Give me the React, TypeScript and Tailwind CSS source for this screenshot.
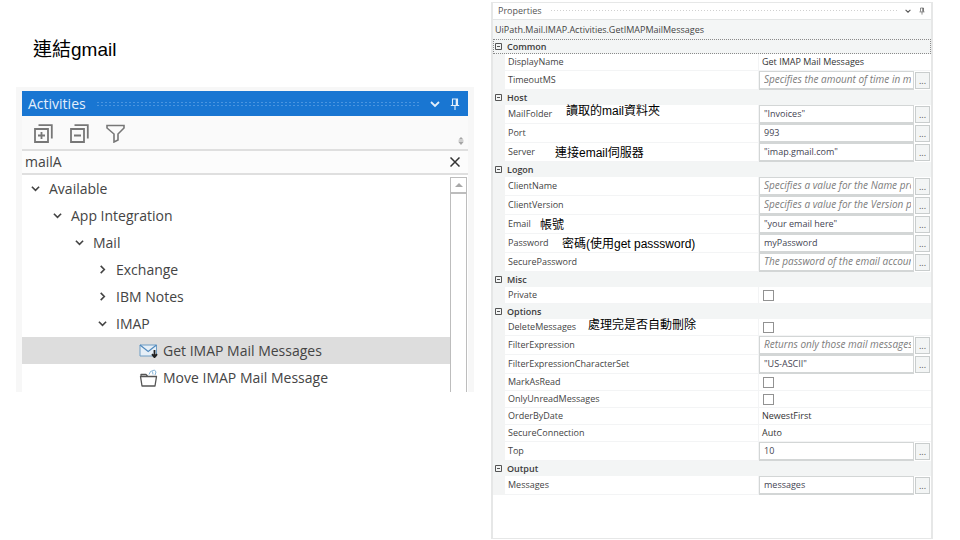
import React from "react";

type Note = { text: string; place: string };
type Row = {
  name: string;
  kind: "text" | "input" | "check";
  value?: string;
  hint?: string;
  note?: Note;
};
type Group = { title: string; focused?: boolean; rows: Row[] };

const groups: Group[] = [
  {
    title: "Common",
    focused: true,
    rows: [
      { name: "DisplayName", kind: "text", value: "Get IMAP Mail Messages" },
      { name: "TimeoutMS", kind: "input", hint: "Specifies the amount of time in milliseconds" },
    ],
  },
  {
    title: "Host",
    rows: [
      { name: "MailFolder", kind: "input", value: '"Invoices"', note: { text: "讀取的mail資料夾", place: "left-[73px] items-start" } },
      { name: "Port", kind: "input", value: "993" },
      { name: "Server", kind: "input", value: '"imap.gmail.com"', note: { text: "連接email伺服器", place: "left-[62px] items-center" } },
    ],
  },
  {
    title: "Logon",
    rows: [
      { name: "ClientName", kind: "input", hint: "Specifies a value for the Name property" },
      { name: "ClientVersion", kind: "input", hint: "Specifies a value for the Version property" },
      { name: "Email", kind: "input", value: '"your email here"', note: { text: "帳號", place: "left-[47px] items-center" } },
      { name: "Password", kind: "input", value: "myPassword", note: { text: "密碼(使用get passsword)", place: "left-[69px] items-center" } },
      { name: "SecurePassword", kind: "input", hint: "The password of the email account" },
    ],
  },
  { title: "Misc", rows: [{ name: "Private", kind: "check" }] },
  {
    title: "Options",
    rows: [
      { name: "DeleteMessages", kind: "check", note: { text: "處理完是否自動刪除", place: "left-[95px] items-start" } },
      { name: "FilterExpression", kind: "input", hint: "Returns only those mail messages" },
      { name: "FilterExpressionCharacterSet", kind: "input", value: '"US-ASCII"' },
      { name: "MarkAsRead", kind: "check" },
      { name: "OnlyUnreadMessages", kind: "check" },
      { name: "OrderByDate", kind: "text", value: "NewestFirst" },
      { name: "SecureConnection", kind: "text", value: "Auto" },
      { name: "Top", kind: "input", value: "10" },
    ],
  },
  { title: "Output", rows: [{ name: "Messages", kind: "input", value: "messages" }] },
];

function Chevron({ open = true, className = "" }: { open?: boolean; className?: string }) {
  return (
    <svg viewBox="0 0 10 10" className={className} fill="none" stroke="currentColor" strokeWidth="1.8">
      <path d={open ? "M1 3l4 4 4-4" : "M3 1l4 4-4 4"} />
    </svg>
  );
}

function Pin({ className = "" }: { className?: string }) {
  return (
    <svg viewBox="0 0 10 12" className={className} fill="none" stroke="currentColor" strokeWidth="1.1">
      <path d="M2.5 7V1h5v6M0.8 7.5h8.4M5 7.5V12" />
      <path d="M6.5 1v6" strokeWidth="1.6" />
    </svg>
  );
}

function PropertyRow({ row }: { row: Row }) {
  const id = "prop-" + row.name;
  return (
    <div className={`relative flex ${row.kind === "input" ? "h-[19px]" : "h-[17px]"}`}>
      <div className="w-3 shrink-0 bg-[#f3f4f4]" />
      <label htmlFor={id} className="flex min-w-0 flex-1 items-center border-b border-[#f3f4f5] pl-[3px] text-[#444]">
        {row.name}
      </label>
      {row.kind === "input" && (
        <div className="flex w-[173px] shrink-0 items-stretch border-l border-[#f3f4f5]">
          <input
            id={id}
            defaultValue={row.value}
            placeholder={row.hint}
            className="min-w-0 flex-1 border border-b-2 border-[#d3d6d6] bg-white pr-0.5 pl-1 text-[#444452] outline-none placeholder:text-[10px] placeholder:text-[#7c7c7c] placeholder:italic placeholder:opacity-100"
          />
          <button
            type="button"
            aria-label={"Edit " + row.name}
            className="my-px mr-px ml-px flex w-[15px] items-center justify-center border border-[#c9cdcd] bg-[#f3f5f5] text-[#555]"
          >
            ...
          </button>
        </div>
      )}
      {row.kind === "check" && (
        <div className="flex w-[173px] shrink-0 items-center border-b border-l border-[#f3f4f5] pl-1">
          <input id={id} type="checkbox" className="h-[11px] w-[11px] appearance-none border border-[#929292] bg-white" />
        </div>
      )}
      {row.kind === "text" && (
        <output id={id} className="flex w-[173px] shrink-0 items-center border-b border-l border-[#f3f4f5] pl-[3px] text-[#333]">
          {row.value}
        </output>
      )}
      {row.note && (
        <span
          className={`pointer-events-none absolute inset-y-0 flex whitespace-nowrap font-['Liberation_Sans','Noto_Sans_CJK_TC',sans-serif] text-xs leading-none text-black ${row.note.place}`}
        >
          {row.note.text}
        </span>
      )}
    </div>
  );
}

function PropertiesPanel() {
  return (
    <section className="mt-0.5 mb-px min-w-0 border-x-2 border-t border-b border-[#e6e7e7] bg-white font-['Open_Sans','Noto_Sans',sans-serif] text-[9px]">
      <header className="flex h-4 items-center pr-1.5 pl-[5px] text-[#555]">
        <h2>Properties</h2>
        <div className="mx-2 h-1 flex-1 bg-[radial-gradient(#d0d0d0_30%,transparent_45%)] bg-[length:3px_3px]" />
        <button type="button" aria-label="Panel options" className="mr-2">
          <Chevron className="h-1.5 w-1.5" />
        </button>
        <button type="button" aria-label="Pin panel">
          <Pin className="h-2 w-1.5" />
        </button>
      </header>
      <div className="flex h-5 items-center border-t border-[#e3e5e5] bg-[#f4f6f6] pl-0.5 text-[#444]">
        UiPath.Mail.IMAP.Activities.GetIMAPMailMessages
      </div>
      {groups.map((g) => (
        <div key={g.title}>
          <h3
            className={`flex h-[15px] items-center bg-[#f3f5f5] font-semibold text-[#3c3c3c] ${g.focused ? "border border-dotted border-[#8a8a8a]" : "border border-transparent"}`}
          >
            <button type="button" className="flex items-center gap-[5px] leading-none">
              <svg viewBox="0 0 7 7" className="ml-px h-[7px] w-[7px]" fill="none" stroke="#555">
                <path d="M.5.5h6v6h-6zM2 3.5h3" />
              </svg>
              {g.title}
            </button>
          </h3>
          {g.rows.map((r) => (
            <PropertyRow key={r.name} row={r} />
          ))}
        </div>
      ))}
    </section>
  );
}

const tree = [
  { label: "Available", indent: "pl-[9px]", open: true },
  { label: "App Integration", indent: "pl-[31px]", open: true },
  { label: "Mail", indent: "pl-[53px]", open: true },
  { label: "Exchange", indent: "pl-[76px]", open: false },
  { label: "IBM Notes", indent: "pl-[76px]", open: false },
  { label: "IMAP", indent: "pl-[76px]", open: true },
];

function ActivitiesPanel() {
  return (
    <section className="flex h-[305px] flex-col overflow-hidden border-x-6 border-t-4 border-[#f7f7f7] bg-white font-['Open_Sans','Noto_Sans',sans-serif] text-sm text-[#444]">
      <header className="flex h-[25px] shrink-0 items-center bg-[#1976d2] pr-2 pl-1.5 text-[#e3effb]">
        <h2>Activities</h2>
        <div className="mx-2.5 h-1.5 flex-1 bg-[radial-gradient(#4a95e0_25%,transparent_40%)] bg-[length:4px_3px]" />
        <button type="button" aria-label="Panel options" className="mr-2.5">
          <Chevron className="h-2.5 w-2.5" />
        </button>
        <button type="button" aria-label="Pin panel">
          <Pin className="h-3 w-2.5" />
        </button>
      </header>
      <div className="flex h-[33px] shrink-0 items-center gap-[17px] bg-[#fafafa] pt-0.5 pr-1 pl-3 text-[#777]">
        <button type="button" aria-label="Expand all">
          <svg viewBox="0 0 19 19" className="h-[19px] w-[19px]" fill="none" stroke="currentColor" strokeWidth="1.8">
            <path d="M1 5h13v13H1zM4.500 1.200h13.300v13.300M7.500 8v7M4 11.500h7" />
          </svg>
        </button>
        <button type="button" aria-label="Collapse all">
          <svg viewBox="0 0 19 19" className="h-[19px] w-[19px]" fill="none" stroke="currentColor" strokeWidth="1.8">
            <path d="M1 5h13v13H1zM4.500 1.200h13.300v13.300M4 11.500h7" />
          </svg>
        </button>
        <button type="button" aria-label="Filter">
          <svg viewBox="0 0 19 19" className="h-[19px] w-[19px]" fill="none" stroke="currentColor" strokeWidth="1.6">
            <path d="M1 1.500h17v2.500l-6 6v6l-4 2v-8l-7-6z" />
          </svg>
        </button>
        <svg viewBox="0 0 6 8" className="mb-1 ml-auto h-2 w-1.5 self-end" fill="#a5a5a5">
          <path d="M3 0l2.500 2.500h-5zM.5 3.500h5v1h-5zM3 8L.5 5h5z" />
        </svg>
      </div>
      <div className="flex h-[26px] shrink-0 items-center border-y-2 border-[#dfdfdf] bg-[#fcfcfc] pr-2 pl-[3px]">
        <input aria-label="Search activities" defaultValue="mailA" className="min-w-0 flex-1 bg-transparent outline-none" />
        <button type="button" aria-label="Clear search">
          <svg viewBox="0 0 10 10" className="h-2.5 w-2.5" stroke="#333" strokeWidth="1.500">
            <path d="M.5.5l9 9M9.500.5l-9 9" />
          </svg>
        </button>
      </div>
      <div className="flex min-h-0 flex-1">
        <ul className="min-w-0 flex-1">
          {tree.map((n) => (
            <li key={n.label}>
              <button type="button" aria-expanded={n.open} className={`flex h-[27px] w-full items-center gap-[9px] ${n.indent}`}>
                <Chevron open={n.open} className="h-[9px] w-[9px]" />
                {n.label}
              </button>
            </li>
          ))}
          <li>
            <button type="button" className="flex h-[27px] w-full items-center gap-[5px] bg-[#dddddd] pl-[117px]">
              <svg viewBox="0 0 19 14" className="h-[14px] w-[19px]" fill="none">
                <path d="M1 1h16.500v11H1z" fill="#e6eff7" stroke="#6d9cc4" />
                <path d="M1 1l8.200 6.500L17.500 1" stroke="#5089bd" strokeWidth="1.200" />
                <path d="M15.500 6v7M13 10.200l2.500 3 2.500-3" stroke="#222" strokeWidth="1.800" />
              </svg>
              Get IMAP Mail Messages
            </button>
          </li>
          <li>
            <button type="button" className="flex h-[27px] w-full items-center gap-[5px] pl-[117px]">
              <svg viewBox="0 0 19 18" className="h-[18px] w-[19px]" fill="none">
                <path d="M3 17h13l1.500-9.500H1.500zM2 7.500V5.500h5L8.500 7" stroke="#555" strokeWidth="1.300" strokeLinejoin="round" />
                <path d="M10 5.500l1.500-3 4-1.500 1.500 2-1 3M13.500 2.500l.5 3" stroke="#86b4d8" />
              </svg>
              Move IMAP Mail Message
            </button>
          </li>
        </ul>
        <div className="mt-0.5 mr-px flex w-[17px] flex-col border-x border-[#bdbdbd]">
          <button type="button" aria-label="Scroll up" className="flex h-[17px] items-center justify-center border-t border-b-2 border-[#bdbdbd]">
            <svg viewBox="0 0 8 4" className="h-1 w-2" fill="#a8a8a8">
              <path d="M4 0l4 4H0z" />
            </svg>
          </button>
          <div className="flex-1" />
        </div>
      </div>
    </section>
  );
}

export default function App() {
  return (
    <main className="grid min-h-screen grid-cols-[458fr_442fr] gap-[17px] bg-white pr-[27px] pl-4">
      <div className="min-w-0 pt-9">
        <h1 className="mb-[23px] pl-[17px] font-['Liberation_Sans','Noto_Sans_CJK_TC',sans-serif] text-[19px] leading-7 text-black">
          連結gmail
        </h1>
        <ActivitiesPanel />
      </div>
      <PropertiesPanel />
    </main>
  );
}
